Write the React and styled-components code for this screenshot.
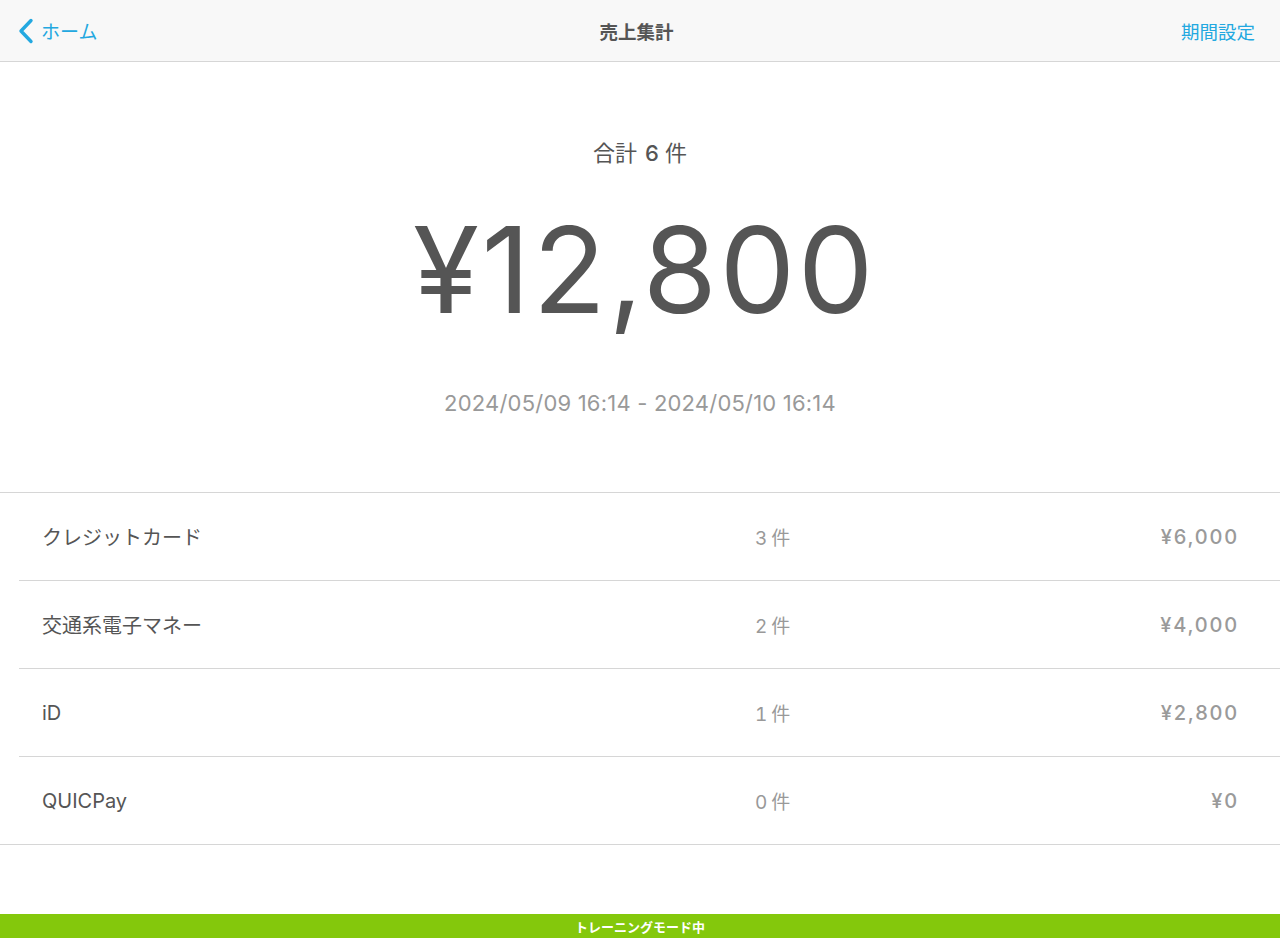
import styled, { createGlobalStyle } from "styled-components";

const GlobalStyle = createGlobalStyle`
  html, body {
    margin: 0;
    padding: 0;
    background: #ffffff;
  }
  body {
    font-family: Inter, "Noto Sans CJK JP", sans-serif;
    color: #555555;
  }
`;

const Page = styled.div`
  min-height: 100vh;
  display: flex;
  flex-direction: column;
`;

const NavBar = styled.header`
  height: 61px;
  display: grid;
  grid-template-columns: 1fr auto 1fr;
  align-items: center;
  background: #f8f8f8;
  border-bottom: 1px solid #d6d6d6;
  padding: 0 25px 0 18px;
`;

const BackButton = styled.button`
  justify-self: start;
  display: flex;
  align-items: center;
  gap: 7px;
  border: none;
  background: transparent;
  padding: 0;
  color: #23a8e0;
  font-family: "Noto Sans CJK JP", sans-serif;
  font-size: 19px;
  cursor: pointer;

  svg {
    width: 16px;
    height: 26px;
  }
`;

const NavTitle = styled.h1`
  margin: 0;
  font-family: "Noto Sans CJK JP", sans-serif;
  font-size: 18.5px;
  font-weight: 700;
  color: #555555;
`;

const NavAction = styled.button`
  justify-self: end;
  border: none;
  background: transparent;
  padding: 0;
  color: #23a8e0;
  font-family: "Noto Sans CJK JP", sans-serif;
  font-size: 18.5px;
  cursor: pointer;
`;

const Summary = styled.section`
  display: flex;
  flex-direction: column;
  align-items: center;
  padding: 76px 0 74px;
  border-bottom: 1px solid #d6d6d6;
`;

const CountLine = styled.div`
  line-height: 30px;
  font-size: 22px;
  color: #555555;

  b {
    font-weight: 500;
    margin: 0 6px 0 8px;
  }
`;

const Total = styled.div`
  margin-top: 32px;
  padding-left: 9px;
  line-height: 140px;
  font-size: 120px;
  font-weight: 400;
  letter-spacing: 2.5px;
  color: #555555;
`;

const Period = styled.div`
  margin-top: 48px;
  line-height: 30px;
  font-size: 22px;
  letter-spacing: 0.2px;
  color: #999999;
`;

const List = styled.div`
  display: flex;
  flex-direction: column;
`;

const Row = styled.div`
  height: 87px;
  display: grid;
  grid-template-columns: 713px auto 1fr;
  align-items: center;
  margin-left: ${(p) => (p.$full ? 0 : 19)}px;
  padding-left: ${(p) => (p.$full ? 42 : 23)}px;
  padding-right: 42px;
  border-bottom: 1px solid #d6d6d6;
`;

const Label = styled.span`
  font-size: 20px;
  color: #555555;
`;

const Count = styled.span`
  font-size: 19px;
  font-variant-numeric: tabular-nums;
  color: #999999;

  small {
    font-size: 19px;
    margin-left: 4px;
  }
`;

const Amount = styled.span`
  justify-self: end;
  font-size: 20px;
  font-weight: 500;
  letter-spacing: 1.8px;
  margin-right: -1px;
  color: #9a9a9a;
`;

const TrainingBar = styled.footer`
  margin-top: auto;
  height: 24px;
  display: flex;
  align-items: center;
  justify-content: center;
  background: #84c80c;
  color: #ffffff;
  font-family: "Noto Sans CJK JP", sans-serif;
  font-size: 13px;
  font-weight: 700;
`;

const rows = [
  { label: "クレジットカード", count: 3, amount: "¥6,000" },
  { label: "交通系電子マネー", count: 2, amount: "¥4,000" },
  { label: "iD", count: 1, amount: "¥2,800" },
  { label: "QUICPay", count: 0, amount: "¥0" },
];

function ChevronLeft() {
  return (
    <svg viewBox="0 0 16 26" fill="none">
      <path
        d="M13 2.5L3 13l10 10.5"
        stroke="currentColor"
        strokeWidth="3.4"
        strokeLinecap="round"
        strokeLinejoin="round"
      />
    </svg>
  );
}

export default function App() {
  return (
    <Page>
      <GlobalStyle />
      <NavBar>
        <BackButton>
          <ChevronLeft />
          ホーム
        </BackButton>
        <NavTitle>売上集計</NavTitle>
        <NavAction>期間設定</NavAction>
      </NavBar>
      <Summary>
        <CountLine>
          合計<b>6</b>件
        </CountLine>
        <Total>¥12,800</Total>
        <Period>2024/05/09 16:14 - 2024/05/10 16:14</Period>
      </Summary>
      <List>
        {rows.map((r, i) => (
          <Row key={r.label} $full={i === rows.length - 1}>
            <Label>{r.label}</Label>
            <Count>
              {r.count}
              <small>件</small>
            </Count>
            <Amount>{r.amount}</Amount>
          </Row>
        ))}
      </List>
      <TrainingBar>トレーニングモード中</TrainingBar>
    </Page>
  );
}
